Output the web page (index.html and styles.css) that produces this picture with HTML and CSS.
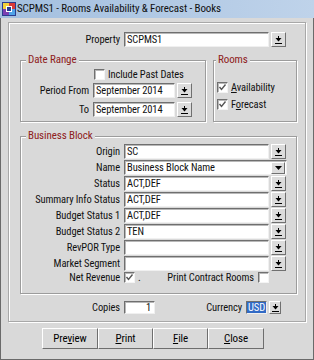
FILE: index.html
```html
<!DOCTYPE html>
<html lang="en">
<head>
    <meta charset="UTF-8">
    <meta name="viewport" content="width=device-width, initial-scale=1.0">
    <title>SCPMS1 - Rooms Availability &amp; Forecast - Books</title>
    <link rel="stylesheet" href="styles.css">
</head>
<body>

    <div class="window">
        <div class="titlebar">
            <svg class="app-icon" width="14" height="14" viewBox="0 0 14 14">
                <rect x="0" y="0" width="14" height="14" fill="#2a3d8f"/>
                <rect x="1" y="1" width="6" height="6" fill="#f2d23a"/>
                <rect x="7" y="1" width="6" height="6" fill="#d93a3a"/>
                <rect x="1" y="7" width="6" height="6" fill="#7a3fb0"/>
                <rect x="7" y="7" width="6" height="6" fill="#4fa3e8"/>
                <rect x="4" y="4" width="6" height="6" fill="#ffffff"/>
                <rect x="5" y="5" width="4" height="4" fill="#2a3d8f"/>
            </svg>
            <span class="title">SCPMS1 - Rooms Availability &amp; Forecast - Books</span>
        </div>

        <div class="panel">
            <div class="field-row prop-row">
                <span class="lbl lbl-panel">Property</span>
                <div class="input w-main">SCPMS1</div>
                <span class="drop"><svg width="7" height="8" viewBox="0 0 7 8"><rect x="3" y="0" width="1" height="2"/><polygon points="0.5,2 6.5,2 3.5,5.5"/><rect x="0" y="7" width="7" height="1"/></svg></span>
            </div>

            <div class="groups">
                <fieldset class="group date-group">
                    <legend>Date Range</legend>
                    <div class="check-row past-row"><span class="check"></span>Include Past Dates</div>
                    <div class="field-row period-row">
                        <span class="lbl lbl-date">Period From</span>
                        <div class="input w-date">September 2014</div>
                        <span class="drop"><svg width="7" height="8" viewBox="0 0 7 8"><rect x="3" y="0" width="1" height="2"/><polygon points="0.5,2 6.5,2 3.5,5.5"/><rect x="0" y="7" width="7" height="1"/></svg></span>
                    </div>
                    <div class="field-row to-row">
                        <span class="lbl lbl-date">To</span>
                        <div class="input w-date">September 2014</div>
                        <span class="drop"><svg width="7" height="8" viewBox="0 0 7 8"><rect x="3" y="0" width="1" height="2"/><polygon points="0.5,2 6.5,2 3.5,5.5"/><rect x="0" y="7" width="7" height="1"/></svg></span>
                    </div>
                </fieldset>

                <fieldset class="group rooms-group">
                    <legend>Rooms</legend>
                    <div class="check-row avail-row"><span class="check"><svg width="9" height="9" viewBox="0 0 9 9"><polyline points="1.5,4 3.5,6.5 7.5,1.5"/></svg></span><span><u>A</u>vailability</span></div>
                    <div class="check-row forecast-row"><span class="check"><svg width="9" height="9" viewBox="0 0 9 9"><polyline points="1.5,4 3.5,6.5 7.5,1.5"/></svg></span><span>F<u>o</u>recast</span></div>
                </fieldset>
            </div>

            <fieldset class="group block-group">
                <legend>Business Block</legend>
                <div class="rows">
                    <div class="field-row">
                        <span class="lbl lbl-block">Origin</span>
                        <div class="input w-main">SC</div>
                        <span class="drop"><svg width="7" height="8" viewBox="0 0 7 8"><rect x="3" y="0" width="1" height="2"/><polygon points="0.5,2 6.5,2 3.5,5.5"/><rect x="0" y="7" width="7" height="1"/></svg></span>
                    </div>
                    <div class="field-row">
                        <span class="lbl lbl-block">Name</span>
                        <div class="input combo">
                            <span class="combo-text">Business Block Name</span>
                            <span class="combo-btn"><svg width="7" height="4" viewBox="0 0 7 4"><polygon points="0,0 7,0 3.5,4"/></svg></span>
                        </div>
                    </div>
                    <div class="field-row">
                        <span class="lbl lbl-block">Status</span>
                        <div class="input w-main">ACT,DEF</div>
                        <span class="drop"><svg width="7" height="8" viewBox="0 0 7 8"><rect x="3" y="0" width="1" height="2"/><polygon points="0.5,2 6.5,2 3.5,5.5"/><rect x="0" y="7" width="7" height="1"/></svg></span>
                    </div>
                    <div class="field-row">
                        <span class="lbl lbl-block">Summary Info Status</span>
                        <div class="input w-main">ACT,DEF</div>
                        <span class="drop"><svg width="7" height="8" viewBox="0 0 7 8"><rect x="3" y="0" width="1" height="2"/><polygon points="0.5,2 6.5,2 3.5,5.5"/><rect x="0" y="7" width="7" height="1"/></svg></span>
                    </div>
                    <div class="field-row">
                        <span class="lbl lbl-block">Budget Status 1</span>
                        <div class="input w-main">ACT,DEF</div>
                        <span class="drop"><svg width="7" height="8" viewBox="0 0 7 8"><rect x="3" y="0" width="1" height="2"/><polygon points="0.5,2 6.5,2 3.5,5.5"/><rect x="0" y="7" width="7" height="1"/></svg></span>
                    </div>
                    <div class="field-row">
                        <span class="lbl lbl-block">Budget Status 2</span>
                        <div class="input w-main">TEN</div>
                        <span class="drop"><svg width="7" height="8" viewBox="0 0 7 8"><rect x="3" y="0" width="1" height="2"/><polygon points="0.5,2 6.5,2 3.5,5.5"/><rect x="0" y="7" width="7" height="1"/></svg></span>
                    </div>
                    <div class="field-row">
                        <span class="lbl lbl-block">RevPOR Type</span>
                        <div class="input w-main"></div>
                        <span class="drop"><svg width="7" height="8" viewBox="0 0 7 8"><rect x="3" y="0" width="1" height="2"/><polygon points="0.5,2 6.5,2 3.5,5.5"/><rect x="0" y="7" width="7" height="1"/></svg></span>
                    </div>
                    <div class="field-row">
                        <span class="lbl lbl-block">Market Segment</span>
                        <div class="input w-main"></div>
                        <span class="drop"><svg width="7" height="8" viewBox="0 0 7 8"><rect x="3" y="0" width="1" height="2"/><polygon points="0.5,2 6.5,2 3.5,5.5"/><rect x="0" y="7" width="7" height="1"/></svg></span>
                    </div>
                </div>
                <div class="net-row">
                    <span class="lbl lbl-block">Net Revenue</span>
                    <span class="check"><svg width="9" height="9" viewBox="0 0 9 9"><polyline points="1.5,4 3.5,6.5 7.5,1.5"/></svg></span>
                    <span class="dot">.</span>
                    <span class="print-opt">
                        <span class="print-lbl">Print Contract Rooms</span>
                        <span class="check"></span>
                    </span>
                </div>
            </fieldset>

            <div class="copies-row">
                <span class="lbl lbl-panel">Copies</span>
                <div class="input copies">1</div>
                <span class="lbl currency-lbl">Currency</span>
                <div class="input currency"><span class="selected">USD</span></div>
                <span class="drop drop-small"><svg width="7" height="8" viewBox="0 0 7 8"><rect x="3" y="0" width="1" height="2"/><polygon points="0.5,2 6.5,2 3.5,5.5"/><rect x="0" y="7" width="7" height="1"/></svg></span>
            </div>
        </div>

        <div class="buttons">
            <button class="btn wide">Pre<u>v</u>iew</button>
            <button class="btn"><u>P</u>rint</button>
            <button class="btn"><u>F</u>ile</button>
            <button class="btn wide"><u>C</u>lose</button>
        </div>
    </div>

</body>
</html>
```

FILE: styles.css
```css
body {
    margin: 0;
    font-family: "Roboto Condensed", Roboto, "Liberation Sans", Arial, sans-serif;
    font-size: 10.5px;
    letter-spacing: -0.1px;
    color: #111;
    background: #d9d9d9;
}
u {
    text-decoration: underline;
    text-underline-offset: 1px;
}
.window {
    width: 314px;
    height: 360px;
    box-sizing: border-box;
    background: #d9d9d9;
    border-left: 1px solid #6a6a6a;
    border-right: 1px solid #6a6a6a;
    border-bottom: 1px solid #6a6a6a;
}
.titlebar {
    height: 18px;
    margin: 0 -1px;
    display: flex;
    align-items: center;
    padding-left: 2px;
    background: linear-gradient(to right, #a3bfdf, #bfd3ea);
}
.app-icon {
    flex: none;
}
.title {
    margin-left: 1px;
    line-height: 18px;
    font-size: 11px;
    letter-spacing: -0.1px;
}

/* main panel */
.panel {
    margin: 4px 0 0 7px;
    width: 298px;
    box-sizing: border-box;
    border: 1px solid #a8a8a8;
    box-shadow: 1px 1px 0 #ffffff, inset 1px 1px 0 #ffffff;
    padding-bottom: 7px;
}
.field-row {
    display: flex;
    align-items: center;
    height: 15px;
}
.lbl {
    flex: none;
    text-align: right;
    white-space: nowrap;
    margin-right: 4px;
}
.lbl-panel {
    width: 111px;
}
.lbl-date {
    width: 68px;
}
.lbl-block {
    width: 99px;
}
.prop-row {
    margin-top: 9px;
}
.input {
    height: 15px;
    box-sizing: border-box;
    background: #fff;
    border: 1px solid;
    border-color: #6f6f6f #f0f0f0 #f0f0f0 #6f6f6f;
    box-shadow: inset 1px 1px 0 #b8b8b8;
    padding-left: 2px;
    line-height: 13px;
    white-space: nowrap;
    overflow: hidden;
    flex: none;
}
.w-main {
    width: 145px;
}
.w-date {
    width: 82px;
}
.drop {
    flex: none;
    width: 15px;
    height: 15px;
    box-sizing: border-box;
    margin-left: 2px;
    background: #dcdcdc;
    border: 1px solid;
    border-color: #ffffff #707070 #707070 #ffffff;
    display: flex;
    align-items: center;
    justify-content: center;
}
.drop svg {
    fill: #000;
}
.drop-small {
    width: 12px;
    height: 13px;
}

/* group boxes */
.group {
    margin: 0;
    padding: 0;
    border: 1px solid #9c9c9c;
    box-shadow: 1px 1px 0 #ffffff, inset 1px 1px 0 #ffffff;
    min-width: 0;
}
.group legend {
    padding: 0 2px;
    margin-left: 5px;
    line-height: 12px;
    font-size: 11px;
    color: #8e2020;
    background: #d9d9d9;
}
.groups {
    display: flex;
    margin: 7px 0 0 11px;
    gap: 7px;
}
.date-group {
    width: 186px;
    box-sizing: border-box;
    padding-bottom: 4px;
}
.rooms-group {
    width: 84px;
    box-sizing: border-box;
}
.rooms-group legend {
    margin-left: 2px;
}
.check-row {
    display: flex;
    align-items: center;
    height: 13px;
    white-space: nowrap;
}
.check {
    flex: none;
    width: 11px;
    height: 11px;
    box-sizing: border-box;
    background: #fff;
    border: 1px solid;
    border-color: #707070 #f4f4f4 #f4f4f4 #707070;
    box-shadow: inset 1px 1px 0 #b8b8b8;
    display: flex;
    align-items: center;
    justify-content: center;
    margin-right: 3px;
}
.check svg polyline {
    fill: none;
    stroke: #555;
    stroke-width: 1.4;
}
.past-row {
    margin-top: 2px;
    padding-left: 73px;
}
.period-row {
    margin-top: 2px;
}
.to-row {
    margin-top: 4px;
}
.avail-row {
    margin-top: 15px;
    padding-left: 3px;
}
.forecast-row {
    margin-top: 4px;
    padding-left: 3px;
}

/* business block */
.block-group {
    width: 277px;
    box-sizing: border-box;
    margin: 8px 0 0 11px;
    padding-bottom: 9px;
}
.rows {
    display: flex;
    flex-direction: column;
    gap: 1px;
    margin-top: 2px;
}
.combo {
    width: 163px;
    display: flex;
    align-items: center;
    padding-right: 1px;
}
.combo-text {
    flex: 1;
}
.combo-btn {
    width: 14px;
    height: 12px;
    box-sizing: border-box;
    background: #dcdcdc;
    border: 1px solid;
    border-color: #ffffff #707070 #707070 #ffffff;
    display: flex;
    align-items: center;
    justify-content: center;
}
.net-row {
    display: flex;
    align-items: center;
    height: 13px;
}
.dot {
    flex: none;
    width: 3px;
}
.print-opt {
    flex: none;
    width: 128px;
    display: flex;
    align-items: center;
    justify-content: flex-end;
}
.print-lbl {
    margin-right: 4px;
    white-space: nowrap;
}
.print-opt .check {
    margin-right: 0;
}

/* copies / currency */
.copies-row {
    display: flex;
    align-items: center;
    height: 13px;
    margin-top: 7px;
}
.copies-row .input {
    height: 13px;
    line-height: 11px;
}
.copies {
    width: 31px;
    text-align: right;
    padding-right: 3px;
}
.currency-lbl {
    width: 40px;
    margin-left: 47px;
}
.currency {
    width: 21px;
    padding: 0;
}
.selected {
    display: block;
    background: #316ac5;
    color: #fff;
    height: 11px;
    padding-left: 1px;
}

/* bottom buttons */
.buttons {
    display: flex;
    margin: 6px 0 0 41px;
}
.btn {
    width: 55px;
    height: 21px;
    padding: 0;
    font-family: inherit;
    font-size: 11px;
    letter-spacing: inherit;
    color: #000;
    background: #d9d9d9;
    border: 1px solid;
    border-color: #ffffff #6e6e6e #6e6e6e #ffffff;
    border-radius: 0;
}
.btn.wide {
    width: 56px;
}
```
